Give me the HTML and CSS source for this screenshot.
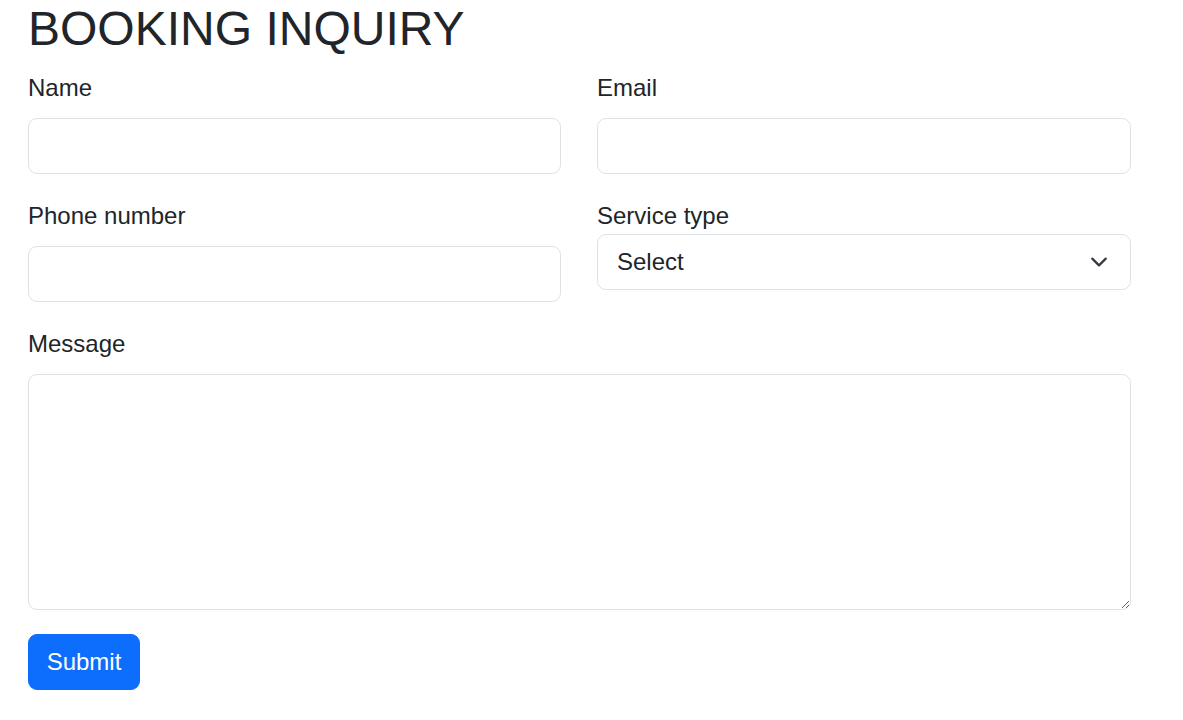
FILE: index.html
```html
<!DOCTYPE html>
<html lang="en">
<head>
<meta charset="utf-8">
<title>Booking Inquiry</title>
<link rel="stylesheet" href="styles.css">
</head>
<body>
<main class="page">
  <h2 class="title">BOOKING INQUIRY</h2>
  <form class="form">
    <div class="grid">
      <div class="field">
        <label class="label" for="name">Name</label>
        <input class="control" id="name" type="text">
      </div>
      <div class="field">
        <label class="label" for="email">Email</label>
        <input class="control" id="email" type="email">
      </div>
      <div class="field">
        <label class="label" for="phone">Phone number</label>
        <input class="control" id="phone" type="tel">
      </div>
      <div class="field">
        <label class="label label-tight" for="service">Service type</label>
        <div class="select-wrap">
          <select class="control select" id="service">
            <option>Select</option>
          </select>
          <svg class="chevron" viewBox="0 0 16 16" width="24" height="18" aria-hidden="true">
            <path d="M2 5l6 6 6-6" fill="none" stroke="#343a40" stroke-width="2" stroke-linecap="round" stroke-linejoin="round"/>
          </svg>
        </div>
      </div>
    </div>
    <div class="field">
      <label class="label" for="message">Message</label>
      <textarea class="control textarea" id="message"></textarea>
    </div>
    <button class="btn" type="submit">Submit</button>
  </form>
</main>
</body>
</html>
```

FILE: styles.css
```css
* {
  box-sizing: border-box;
}

body {
  margin: 0;
  background: #fff;
  color: #212529;
  font-family: "Liberation Sans", Arial, sans-serif;
  font-size: 24px;
  line-height: 1.5;
}

.page {
  width: 1131px;
  padding-left: 28px;
}

.title {
  margin: 0 0 12px;
  font-size: 48px;
  font-weight: 400;
  line-height: 1.2;
}

.grid {
  display: grid;
  grid-template-columns: 533px 534px;
  column-gap: 36px;
}

.field {
  display: flex;
  flex-direction: column;
  margin-bottom: 24px;
}

.label {
  display: block;
  height: 36px;
  margin-bottom: 12px;
  line-height: 36px;
}

.label-tight {
  margin-bottom: 0;
}

.control {
  display: block;
  width: 100%;
  height: 56px;
  padding: 9px 18px;
  border: 1px solid #dee2e6;
  border-radius: 9px;
  background: #fff;
  color: #212529;
  font-family: inherit;
  font-size: 24px;
  line-height: 36px;
  outline: none;
}

.select-wrap {
  position: relative;
}

.select {
  appearance: none;
  -webkit-appearance: none;
  padding-left: 19px;
  padding-right: 54px;
}

.chevron {
  position: absolute;
  right: 20px;
  top: 19px;
  pointer-events: none;
}

.textarea {
  height: 236px;
  resize: vertical;
}

.btn {
  display: block;
  width: 112px;
  height: 56px;
  padding: 9px 0;
  border: 1px solid #0d6efd;
  border-radius: 9px;
  background: #0d6efd;
  color: #fff;
  font-family: inherit;
  font-size: 24px;
  line-height: 36px;
  text-align: center;
}
```
